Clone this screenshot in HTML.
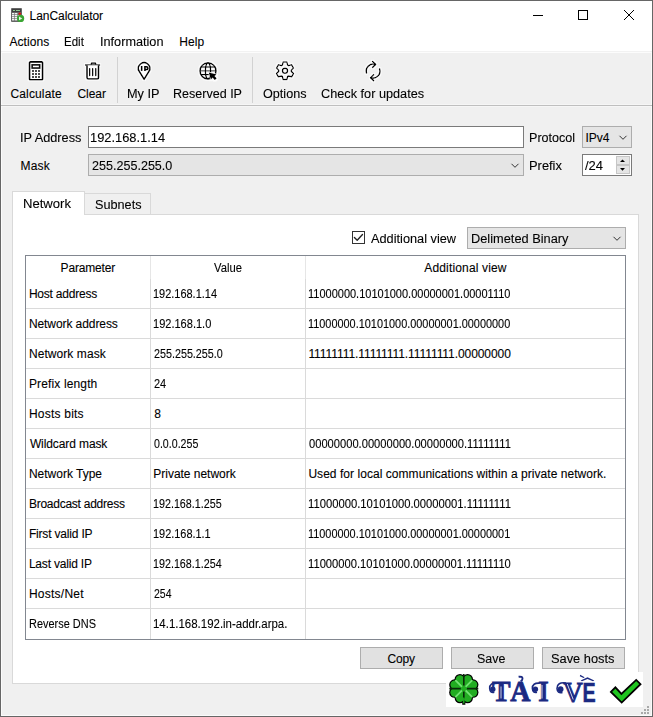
<!DOCTYPE html>
<html><head><meta charset="utf-8">
<style>
html,body{margin:0;padding:0}
body{width:653px;height:717px;overflow:hidden;background:#f0f0f0;position:relative;font-family:"Liberation Sans",sans-serif;font-size:12px;color:#000}
.a{position:absolute;box-sizing:border-box}
.t{position:absolute;font-family:"Liberation Sans",sans-serif;font-size:12px;line-height:12px;white-space:pre;color:#000;-webkit-text-stroke:0.1px #000}
svg{position:absolute;left:0;top:0;overflow:visible}
</style></head><body>
<!-- window frame -->
<div class="a" style="left:0;top:0;width:653px;height:717px;border:1px solid #666"></div>
<div class="a" style="left:1px;top:1px;width:651px;height:715px;border:1px solid #fbfbfb;border-top:none"></div>
<!-- title + menu -->
<div class="a" style="left:1px;top:1px;width:651px;height:50px;background:#fff"></div>
<div class="a" style="left:1px;top:51px;width:651px;height:1px;background:#f2f2f2"></div>
<div class="a" style="left:1px;top:52px;width:651px;height:1px;background:#fcfcfc"></div>
<!-- toolbar bottom line -->
<div class="a" style="left:2px;top:104px;width:649px;height:1px;background:#f6f6f6"></div>
<div class="a" style="left:1px;top:105px;width:651px;height:1px;background:#bfbfbf"></div>
<div class="a" style="left:2px;top:106px;width:649px;height:1px;background:#f6f6f6"></div>
<!-- separators -->
<div class="a" style="left:117px;top:57px;width:1px;height:46px;background:#d2d2d2"></div>
<div class="a" style="left:252px;top:57px;width:1px;height:46px;background:#d2d2d2"></div>

<!-- form controls -->
<div class="a" style="left:88px;top:126px;width:436px;height:22px;border:1px solid #7a7a7a;background:#fff"></div>
<div class="a" style="left:88px;top:154px;width:436px;height:22px;border:1px solid #adadad;background:#e5e5e5"></div>
<div class="a" style="left:582px;top:126px;width:50px;height:22px;border:1px solid #adadad;background:#e5e5e5"></div>
<div class="a" style="left:582px;top:154px;width:50px;height:22px;border:1px solid #7a7a7a;background:#fff"></div>
<div class="a" style="left:616px;top:156px;width:14px;height:9px;border:1px solid #c6c6c6;background:#e5e5e5"></div>
<div class="a" style="left:616px;top:165px;width:14px;height:9px;border:1px solid #c6c6c6;background:#e5e5e5"></div>

<!-- tabs -->
<div class="a" style="left:12px;top:214px;width:627px;height:470px;border:1px solid #d9d9d9;background:#fff"></div>
<div class="a" style="left:84px;top:193px;width:67px;height:22px;border:1px solid #d9d9d9;background:#f0f0f0"></div>
<div class="a" style="left:12px;top:191px;width:73px;height:24px;border:1px solid #d9d9d9;border-bottom:none;background:#fff"></div>

<!-- checkbox -->
<div class="a" style="left:352px;top:231px;width:13px;height:13px;border:1px solid #333;background:#fff"></div>
<!-- view combo -->
<div class="a" style="left:467px;top:227px;width:159px;height:22px;border:1px solid #adadad;background:#e5e5e5"></div>

<!-- table -->
<div class="a" style="left:25px;top:255px;width:601px;height:385px;border:1px solid #828790;background:#fff"></div>
<div class="a" style="left:150px;top:256px;width:1px;height:23px;background:#e6e6e6"></div><div class="a" style="left:150px;top:279px;width:1px;height:360px;background:#dadada"></div>
<div class="a" style="left:305px;top:256px;width:1px;height:23px;background:#e6e6e6"></div><div class="a" style="left:305px;top:279px;width:1px;height:360px;background:#dadada"></div>
<div class="a" style="left:26px;top:308px;width:599px;height:1px;background:#dadada"></div>
<div class="a" style="left:26px;top:338px;width:599px;height:1px;background:#dadada"></div>
<div class="a" style="left:26px;top:368px;width:599px;height:1px;background:#dadada"></div>
<div class="a" style="left:26px;top:398px;width:599px;height:1px;background:#dadada"></div>
<div class="a" style="left:26px;top:428px;width:599px;height:1px;background:#dadada"></div>
<div class="a" style="left:26px;top:458px;width:599px;height:1px;background:#dadada"></div>
<div class="a" style="left:26px;top:488px;width:599px;height:1px;background:#dadada"></div>
<div class="a" style="left:26px;top:518px;width:599px;height:1px;background:#dadada"></div>
<div class="a" style="left:26px;top:548px;width:599px;height:1px;background:#dadada"></div>
<div class="a" style="left:26px;top:578px;width:599px;height:1px;background:#dadada"></div>
<div class="a" style="left:26px;top:608px;width:599px;height:1px;background:#dadada"></div>

<!-- buttons -->
<div class="a" style="left:360px;top:647px;width:83px;height:22px;border:1px solid #adadad;background:#e1e1e1"></div>
<div class="a" style="left:451px;top:647px;width:83px;height:22px;border:1px solid #adadad;background:#e1e1e1"></div>
<div class="a" style="left:542px;top:647px;width:83px;height:22px;border:1px solid #adadad;background:#e1e1e1"></div>

<!-- resize grip -->
<div class="a" style="left:647px;top:706px;width:2px;height:2px;background:#a9a9a9"></div>
<div class="a" style="left:644px;top:709px;width:2px;height:2px;background:#a9a9a9"></div>
<div class="a" style="left:647px;top:709px;width:2px;height:2px;background:#a9a9a9"></div>
<div class="a" style="left:641px;top:712px;width:2px;height:2px;background:#a9a9a9"></div>
<div class="a" style="left:644px;top:712px;width:2px;height:2px;background:#a9a9a9"></div>
<div class="a" style="left:647px;top:712px;width:2px;height:2px;background:#a9a9a9"></div>

<div class="t" style="left:29.60px;top:10px;letter-spacing:-0.050px">LanCalculator</div>
<div class="t" style="left:9.40px;top:36px;letter-spacing:0.083px">Actions</div>
<div class="t" style="left:64.04px;top:36px;transform:scaleX(0.9600);transform-origin:0 0">Edit</div>
<div class="t" style="left:99.94px;top:36px;transform:scaleX(1.0576);transform-origin:0 0">Information</div>
<div class="t" style="left:179.30px;top:36px;letter-spacing:0.067px">Help</div>
<div class="t" style="left:10.50px;top:88px;letter-spacing:0.138px">Calculate</div>
<div class="t" style="left:77.50px;top:88px;letter-spacing:-0.075px">Clear</div>
<div class="t" style="left:127.24px;top:88px;transform:scaleX(1.0586);transform-origin:0 0">My IP</div>
<div class="t" style="left:173.36px;top:88px;transform:scaleX(1.0446);transform-origin:0 0">Reserved IP</div>
<div class="t" style="left:263.10px;top:88px;transform:scaleX(1.0512);transform-origin:0 0">Options</div>
<div class="t" style="left:321.30px;top:88px;transform:scaleX(1.0588);transform-origin:0 0">Check for updates</div>
<div class="t" style="left:20.44px;top:132px;transform:scaleX(1.0614);transform-origin:0 0">IP Address</div>
<div class="t" style="left:90.33px;top:132px;transform:scaleX(1.0725);transform-origin:0 0">192.168.1.14</div>
<div class="t" style="left:529.25px;top:132px;transform:scaleX(1.0465);transform-origin:0 0">Protocol</div>
<div class="t" style="left:585.50px;top:132px;letter-spacing:-0.033px">IPv4</div>
<div class="t" style="left:20.50px;top:160px;letter-spacing:0.200px">Mask</div>
<div class="t" style="left:92.40px;top:160px;transform:scaleX(1.0468);transform-origin:0 0">255.255.255.0</div>
<div class="t" style="left:529.23px;top:160px;transform:scaleX(1.0733);transform-origin:0 0">Prefix</div>
<div class="t" style="left:584.90px;top:160px;transform:scaleX(1.0824);transform-origin:0 0">/24</div>
<div class="t" style="left:23.21px;top:198px;transform:scaleX(1.0907);transform-origin:0 0">Network</div>
<div class="t" style="left:94.54px;top:199px;transform:scaleX(1.0558);transform-origin:0 0">Subnets</div>
<div class="t" style="left:370.50px;top:233px;transform:scaleX(1.0625);transform-origin:0 0">Additional view</div>
<div class="t" style="left:470.93px;top:233px;transform:scaleX(1.0667);transform-origin:0 0">Delimeted Binary</div>
<div class="t" style="left:60.60px;top:262px;letter-spacing:-0.175px">Parameter</div>
<div class="t" style="left:213.90px;top:262px;transform:scaleX(0.9367);transform-origin:0 0">Value</div>
<div class="t" style="left:424.30px;top:262px;letter-spacing:0.157px">Additional view</div>
<div class="t" style="left:28.90px;top:288px;letter-spacing:-0.209px">Host address</div>
<div class="t" style="left:153.39px;top:288px;transform:scaleX(0.9130);transform-origin:0 0">192.168.1.14</div>
<div class="t" style="left:308.48px;top:288px;transform:scaleX(0.9164);transform-origin:0 0">11000000.10101000.00000001.00001110</div>
<div class="t" style="left:28.90px;top:318px;letter-spacing:-0.079px">Network address</div>
<div class="t" style="left:153.38px;top:318px;transform:scaleX(0.9194);transform-origin:0 0">192.168.1.0</div>
<div class="t" style="left:308.49px;top:318px;transform:scaleX(0.9081);transform-origin:0 0">11000000.10101000.00000001.00000000</div>
<div class="t" style="left:28.90px;top:348px;letter-spacing:0.073px">Network mask</div>
<div class="t" style="left:154.30px;top:348px;transform:scaleX(0.8961);transform-origin:0 0">255.255.255.0</div>
<div class="t" style="left:308.40px;top:348px;letter-spacing:-0.071px">11111111.11111111.11111111.00000000</div>
<div class="t" style="left:28.90px;top:378px;letter-spacing:0.142px">Prefix length</div>
<div class="t" style="left:154.30px;top:378px;transform:scaleX(0.9154);transform-origin:0 0">24</div>
<div class="t" style="left:28.90px;top:408px;letter-spacing:0.222px">Hosts bits</div>
<div class="t" style="left:154.30px;top:408px">8</div>
<div class="t" style="left:29.90px;top:438px;letter-spacing:-0.100px">Wildcard mask</div>
<div class="t" style="left:154.30px;top:438px;transform:scaleX(0.8860);transform-origin:0 0">0.0.0.255</div>
<div class="t" style="left:309.40px;top:438px;transform:scaleX(0.9290);transform-origin:0 0">00000000.00000000.00000000.11111111</div>
<div class="t" style="left:28.90px;top:468px">Network Type</div>
<div class="t" style="left:153.30px;top:468px;letter-spacing:-0.021px">Private network</div>
<div class="t" style="left:308.40px;top:468px;letter-spacing:0.048px">Used for local communications within a private network.</div>
<div class="t" style="left:28.90px;top:498px;letter-spacing:-0.250px">Broadcast address</div>
<div class="t" style="left:153.41px;top:498px;transform:scaleX(0.8947);transform-origin:0 0">192.168.1.255</div>
<div class="t" style="left:308.46px;top:498px;transform:scaleX(0.9377);transform-origin:0 0">11000000.10101000.00000001.11111111</div>
<div class="t" style="left:28.90px;top:528px;letter-spacing:-0.177px">First valid IP</div>
<div class="t" style="left:153.39px;top:528px;transform:scaleX(0.9097);transform-origin:0 0">192.168.1.1</div>
<div class="t" style="left:308.49px;top:528px;transform:scaleX(0.9081);transform-origin:0 0">11000000.10101000.00000001.00000001</div>
<div class="t" style="left:28.90px;top:558px;letter-spacing:-0.192px">Last valid IP</div>
<div class="t" style="left:153.41px;top:558px;transform:scaleX(0.8947);transform-origin:0 0">192.168.1.254</div>
<div class="t" style="left:308.47px;top:558px;transform:scaleX(0.9333);transform-origin:0 0">11000000.10101000.00000001.11111110</div>
<div class="t" style="left:28.90px;top:588px;letter-spacing:0.250px">Hosts/Net</div>
<div class="t" style="left:154.30px;top:588px;transform:scaleX(0.8750);transform-origin:0 0">254</div>
<div class="t" style="left:28.99px;top:618px;transform:scaleX(0.9125);transform-origin:0 0">Reverse DNS</div>
<div class="t" style="left:153.35px;top:618px;transform:scaleX(0.9547);transform-origin:0 0">14.1.168.192.in-addr.arpa.</div>
<div class="t" style="left:387.40px;top:653px;letter-spacing:-0.167px">Copy</div>
<div class="t" style="left:477.46px;top:653px;transform:scaleX(1.0385);transform-origin:0 0">Save</div>
<div class="t" style="left:551.23px;top:653px;transform:scaleX(1.0690);transform-origin:0 0">Save hosts</div>

<svg width="653" height="717" viewBox="0 0 653 717">
 <defs><filter id="halo" x="-20%" y="-20%" width="140%" height="140%"><feMorphology in="SourceAlpha" operator="dilate" radius="1" result="d"/><feGaussianBlur in="d" stdDeviation="0.4" result="db"/><feFlood flood-color="#fff" flood-opacity="0.75"/><feComposite in2="db" operator="in" result="w"/><feMerge><feMergeNode in="w"/><feMergeNode in="SourceGraphic"/></feMerge></filter></defs>
 <!-- window controls -->
 <g stroke="#000" stroke-width="1" fill="none">
  <path d="M533,15.5 H543"/>
  <rect x="578.5" y="10.5" width="9" height="9"/>
  <path d="M624,10 L634,20 M634,10 L624,20"/>
 </g>
 <!-- app icon -->
 <g>
  <rect x="11" y="8" width="11" height="14" rx="1" fill="#666"/>
  <rect x="12" y="9" width="9" height="3" fill="#3e3e3e"/>
  <rect x="13" y="10" width="2" height="1" fill="#8fc48f"/>
  <rect x="16" y="10" width="4" height="1" fill="#8fc48f"/>
  <g fill="#f4f4f4">
   <rect x="12" y="13" width="2.4" height="1.4"/><rect x="12" y="15" width="2.4" height="1.4"/><rect x="12" y="17" width="2.4" height="1.4"/><rect x="12" y="19" width="2.4" height="1.4"/><rect x="15" y="13" width="2.4" height="1.4"/><rect x="15" y="15" width="2.4" height="1.4"/><rect x="15" y="17" width="2.4" height="1.4"/><rect x="15" y="19" width="2.4" height="1.4"/><rect x="18" y="15" width="2" height="1.4"/>
  </g>
  <circle cx="19.8" cy="13.7" r="1.3" fill="#e01010"/>
  <circle cx="20.6" cy="18.4" r="3.6" fill="#3aa533"/>
  <path d="M19,16.5 L22.3,18.4 L19,20.3 Z" fill="#e8f7e8"/>
 </g>
 <!-- calculator -->
 <g filter="url(#halo)"><g>
  <rect x="29.45" y="61.95" width="13.2" height="17.8" rx="0.8" fill="#fff" stroke="#000" stroke-width="1.7"/>
  <rect x="32.15" y="64.85" width="7.5" height="3.2" fill="#fff" stroke="#111" stroke-width="1.6"/>
  <g fill="#505050">
   <rect x="32" y="70" width="2" height="2"/><rect x="35" y="70" width="2" height="2"/><rect x="38" y="70" width="2" height="2"/>
   <rect x="32" y="73" width="2" height="2"/><rect x="35" y="73" width="2" height="2"/><rect x="38" y="73" width="2" height="2"/>
   <rect x="32" y="76" width="2" height="2"/><rect x="35" y="76" width="2" height="2"/><rect x="38" y="76" width="2" height="2"/>
  </g>
 </g></g>
 <!-- trash -->
 <g filter="url(#halo)"><g fill="none" stroke="#000">
  <path d="M85,65 H100.1" stroke-width="1.6"/>
  <path d="M90.9,64.6 L91.7,62.9 H95.3 L96.1,64.6" stroke-width="1.4" fill="#888"/>
  <path d="M86.9,65.2 V77.6 Q86.9,79 88.3,79 H97.3 Q98.6,79 98.6,77.6 V65.2" stroke-width="1.6" fill="#fff"/>
  <path d="M89.65,68.6 V75.6 M92.65,68.6 V75.6 M95.75,68.6 V75.6" stroke-width="1.2" stroke-linecap="round"/>
 </g></g>
 <!-- pin -->
 <g filter="url(#halo)"><g fill="none" stroke="#000">
  <path d="M144.1,79.4 L139.15,71.43 A5.8,5.8 0 1 1 149.05,71.43 Z" stroke-width="1.6" stroke-linejoin="round" fill="#fff"/>
  <path d="M141.65,66 V70.9" stroke-width="1.5"/>
  <path d="M144.9,70.9 V66.7 H146.3 Q147.9,66.7 147.9,68.15 Q147.9,69.6 146.3,69.6 H144.9" stroke-width="1.5"/>
 </g></g>
 <!-- globe -->
 <g filter="url(#halo)"><g fill="none" stroke="#000">
  <circle cx="208" cy="70.9" r="8" stroke-width="1.7"/>
  <ellipse cx="208" cy="70.9" rx="2.6" ry="8" stroke-width="1.4"/>
  <path d="M200.5,67 H215.5 M200,70.9 H216 M200.5,74.6 H215.5" stroke-width="1.4"/>
  <path d="M208.8,72.4 L210.9,79.6 L212.6,77.6 L214.8,79.9 L216.6,78.2 L214.4,75.9 L216.4,74.4 Z" fill="#000" stroke="#ffffff" stroke-width="1.4" stroke-linejoin="round" paint-order="stroke"/>
 </g></g>
 <!-- gear -->
 <g filter="url(#halo)"><g fill="none" stroke="#000" stroke-width="1.5" stroke-linejoin="round">
  <path d="M282.34,65.09 L283.15,62.09 L286.85,62.09 L287.66,65.09 L288.61,65.64 L291.61,64.84 L293.46,68.05 L291.28,70.25 L291.28,71.35 L293.46,73.55 L291.61,76.76 L288.61,75.96 L287.66,76.51 L286.85,79.51 L283.15,79.51 L282.34,76.51 L281.39,75.96 L278.39,76.76 L276.54,73.55 L278.72,71.35 L278.72,70.25 L276.54,68.05 L278.39,64.84 L281.39,65.64 Z"/>
  <circle cx="285" cy="70.8" r="2.5"/>
 </g></g>
 <!-- refresh -->
 <g filter="url(#halo)"><g fill="none" stroke="#000" stroke-width="1.6" stroke-linecap="round" stroke-linejoin="round">
  <path d="M366.5,73 A7,7 0 0 1 375.3,64.4"/>
  <path d="M372.6,61.5 L375.6,64.4 L372.6,67.3"/>
  <path d="M379.6,68.9 A7,7 0 0 1 370.8,77.7"/>
  <path d="M373.6,74.7 L370.6,77.7 L373.6,80.6"/>
 </g></g>
 <!-- combo chevrons -->
 <g fill="none" stroke="#333" stroke-width="1">
  <path d="M511.5,163.8 L515,167.3 L518.5,163.8"/>
  <path d="M619.5,135.8 L623,139.3 L626.5,135.8"/>
  <path d="M613.5,236.8 L617,240.3 L620.5,236.8"/>
 </g>
 <!-- spin arrows -->
 <path d="M620,162 L625,162 L622.5,159.5 Z" fill="#000"/>
 <path d="M620,168 L625,168 L622.5,170.7 Z" fill="#000"/>
 <!-- checkmark -->
 <path d="M354.4,237.4 L357.2,240.2 L362.5,234.5" fill="none" stroke="#222" stroke-width="1.35" stroke-linecap="round" stroke-linejoin="round"/>
</svg>

<!-- watermark -->
<div class="a" style="left:446px;top:672px;width:197px;height:35px;background:#fff"></div>
<svg width="653" height="717" viewBox="0 0 653 717">
 <g transform="translate(463.8,688.6)">
  <g fill="#000">
   <circle cx="9.24" cy="3.83" r="5.4"/><circle cx="3.83" cy="9.24" r="5.4"/><circle cx="-3.83" cy="9.24" r="5.4"/><circle cx="-9.24" cy="3.83" r="5.4"/><circle cx="-9.24" cy="-3.83" r="5.4"/><circle cx="-3.83" cy="-9.24" r="5.4"/><circle cx="3.83" cy="-9.24" r="5.4"/><circle cx="9.24" cy="-3.83" r="5.4"/>
   <circle cx="0" cy="0" r="9"/>
   <path d="M-1.2,8 L-1.6,16.2 L1.6,16.2 L1.2,8 Z"/>
  </g>
  <g fill="#22ad22">
   <circle cx="9.24" cy="3.83" r="4.2"/><circle cx="3.83" cy="9.24" r="4.2"/><circle cx="-3.83" cy="9.24" r="4.2"/><circle cx="-9.24" cy="3.83" r="4.2"/><circle cx="-9.24" cy="-3.83" r="4.2"/><circle cx="-3.83" cy="-9.24" r="4.2"/><circle cx="3.83" cy="-9.24" r="4.2"/><circle cx="9.24" cy="-3.83" r="4.2"/>
   <circle cx="0" cy="0" r="8.5"/>
  </g>
  <path d="M0,-14.5 V-3 M0,3 V10 M-14.5,0 H-3 M3,0 H14.5" stroke="#082a08" stroke-width="1.6"/>
  <path d="M-2,-2 L-8,-8 M2,-2 L8,-8 M-2,2 L-8,8 M2,2 L8,8" stroke="#72e272" stroke-width="1.8" stroke-linecap="round"/>
  <circle cx="0" cy="0" r="2.6" fill="#22ad22"/>
  <path d="M0,9 V15" stroke="#1fa61f" stroke-width="1.5"/>
 </g>
 <polygon points="610.9,691.9 615.4,687.3 621.4,693.9 636.2,679.9 640.5,684.2 621.7,702.6" fill="#1fc41f" stroke="#000" stroke-width="1.8" stroke-linejoin="miter"/>
 <g fill="#1b2a82">
  <text x="492" y="701.3" font-family="Liberation Serif" font-weight="bold" font-size="29" stroke="#1b2a82" stroke-width="0.9" textLength="18.5" lengthAdjust="spacingAndGlyphs">T</text>
  <text x="510.3" y="701.3" font-family="Liberation Serif" font-weight="bold" font-size="29" stroke="#1b2a82" stroke-width="0.9" textLength="20.2" lengthAdjust="spacingAndGlyphs">A</text>
  <text x="538.2" y="701.3" font-family="Liberation Serif" font-weight="bold" font-size="29" stroke="#1b2a82" stroke-width="0.9" textLength="10.4" lengthAdjust="spacingAndGlyphs">I</text>
  <text x="563.2" y="701.8" font-family="Liberation Serif" font-weight="bold" font-size="29" stroke="#1b2a82" stroke-width="0.9" textLength="19.5" lengthAdjust="spacingAndGlyphs">V</text>
  <text x="582.4" y="701.6" font-family="Liberation Sans" font-weight="bold" font-size="27" stroke="#1b2a82" stroke-width="0.5" textLength="13.2" lengthAdjust="spacingAndGlyphs">E</text>
  <path d="M518.6,676.8 Q522.6,676.2 522.5,678.7 Q522.4,680.3 520.6,681.2" fill="none" stroke="#1b2a82" stroke-width="1.9"/>
  <path d="M580.6,680.6 L587.5,677.3 L594.3,680.6 L593,681.2 L587.5,678.9 L582,681.2 Z"/>
  <path d="M580.2,674.8 L584.6,677.3 L583.6,678.1 L579.8,676.2 Z"/>
  <circle cx="492.8" cy="689.2" r="2.7"/>
  <path d="M497,683.2 Q489.5,682.6 489.7,688.5 Q490,693.3 494.3,692.2" fill="none" stroke="#1b2a82" stroke-width="1.6"/>
  <circle cx="535.4" cy="689.2" r="2.7"/>
  <path d="M539.8,683.2 Q532.2,682.6 532.4,688.5 Q532.7,693.3 537,692.2" fill="none" stroke="#1b2a82" stroke-width="1.6"/>
  <path d="M501,686.5 V698.5 M542,685 V698.5 M567.3,684 L573.2,699.5" stroke="#fff" stroke-width="0.8" fill="none"/>
  <circle cx="560.6" cy="689.2" r="2.9"/>
  <path d="M566,683 Q557,681.8 557,688.5 Q557.3,693.8 562.5,692.5" fill="none" stroke="#1b2a82" stroke-width="1.6"/>
 </g>
</svg>
</body></html>
